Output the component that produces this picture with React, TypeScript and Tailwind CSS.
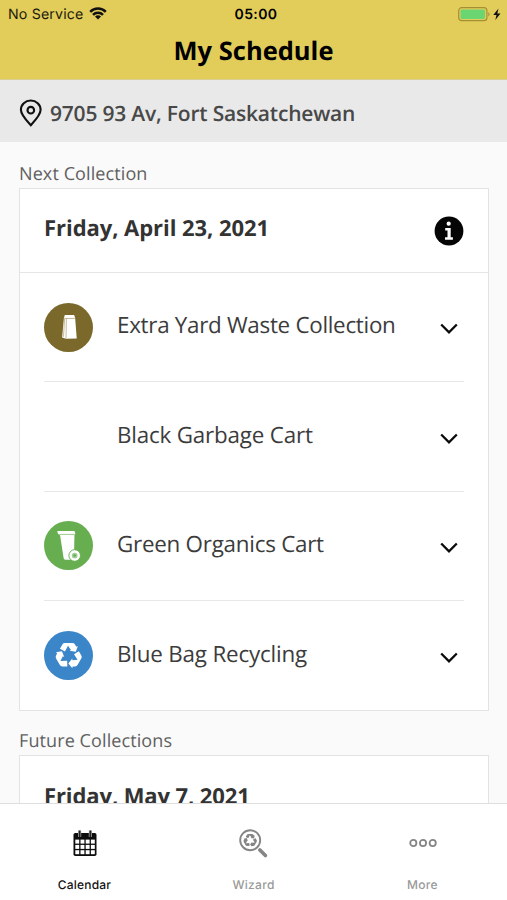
import React from "react";

const openSans = "font-['Open_Sans','Noto_Sans',sans-serif] [text-rendering:geometricPrecision]";

function Wifi() {
  return (
    <svg className="ml-[6px] h-[13px] w-[18px]" viewBox="0 0 18 13">
      <g fill="none" stroke="#111" strokeWidth="2.5">
        <path d="M1.2 4.8a11 11 0 0 1 15.6 0" />
        <path d="M4 7.9a7 7 0 0 1 10 0" />
      </g>
      <path d="M9 12.6 6 9.6a4.3 4.3 0 0 1 6 0z" fill="#111" />
    </svg>
  );
}

function Battery() {
  return (
    <svg className="h-[15px] w-[44px]" viewBox="0 0 44 15">
      <rect x="0.7" y="0.7" width="28.2" height="13" rx="3" fill="none" stroke="#a48f35" strokeWidth="1.2" />
      <rect x="2.5" y="2.5" width="24.5" height="9.4" rx="1.4" fill="#6bd572" />
      <path d="M30.3 5v4.4c1.8-.7 1.8-3.7 0-4.4z" fill="#a48f35" />
      <path d="M40.5 1.5 35.3 8h3.2l-1.2 5 5.2-6.6h-3.2z" fill="#111" />
    </svg>
  );
}

const arrow =
  "M-7.9-6-5.7-9.9Q-4.9-11.2-3.5-11.2H3.2Q4.9-11.2 5.7-9.9L6.9-8 8.3-8.6 6.4-3.3.8-4.2 2-5-.6-8.9-3.4-3.6z";

function RecycleArrows() {
  return (
    <g>
      <path d={arrow} />
      <path d={arrow} transform="rotate(120)" />
      <path d={arrow} transform="rotate(240)" />
    </g>
  );
}

function BagIcon() {
  return (
    <svg className="size-[49px]" viewBox="0 0 50 50">
      <circle cx="25" cy="25" r="25" fill="#7a692b" />
      <path d="M21.2 12.3h9.6l1 3 1.6 20.9-10.8.3-4.1-1.4 1.8-19.5z" fill="#fff" />
      <path d="M20.7 15.8h10.8M22.8 16l-.3 20M21 16l-1.1 18.5" fill="none" stroke="#b3a681" strokeWidth="0.8" />
    </svg>
  );
}

function CartIcon() {
  return (
    <svg className="size-[49px]" viewBox="0 0 50 50">
      <circle cx="25" cy="25" r="25" fill="#67ae50" />
      <path d="M13.5 10.3h17.7l.8 3-.9.8-.5 22c0 2.4-.6 3.4-2 3.4h-6.4c-1.6 0-2-.7-2.3-2.5L16.3 14l-2-.7z" fill="#fff" />
      <path d="M16 13.7h15.4" stroke="#8fc67f" strokeWidth="0.9" />
      <circle cx="31.3" cy="35.2" r="5.9" fill="#fff" stroke="#67ae50" strokeWidth="1" />
      <circle cx="31.3" cy="35.2" r="2.9" fill="#9fce92" />
      <circle cx="31.3" cy="35.2" r="1.3" fill="#67ae50" />
    </svg>
  );
}

function RecycleIcon() {
  return (
    <svg className="size-[49px]" viewBox="0 0 50 50">
      <circle cx="25" cy="25" r="25" fill="#3a86c8" />
      <g fill="#fff" transform="translate(25.2 25) scale(1.13)">
        <RecycleArrows />
      </g>
    </svg>
  );
}

function Chevron() {
  return (
    <svg className="mt-[4px] mr-[6px] h-[12px] w-[18px]" viewBox="0 0 18 12">
      <path d="m1.2 1.5 7.8 7.9 7.8-7.9" fill="none" stroke="#0b0b0b" strokeWidth="2.3" />
    </svg>
  );
}

const rows = [
  { label: "Extra Yard Waste Collection", icon: <BagIcon />, tracking: "tracking-[-0.29px]" },
  { label: "Black Garbage Cart", icon: null, tracking: "tracking-[-0.19px]" },
  { label: "Green Organics Cart", icon: <CartIcon />, tracking: "tracking-[-0.25px]" },
  { label: "Blue Bag Recycling", icon: <RecycleIcon />, tracking: "tracking-[-0.19px]" },
];

function CalendarIcon() {
  return (
    <svg className="h-[27px] w-[26px]" viewBox="0 0 26 27">
      <rect x="1.5" y="3" width="23" height="23" rx="1.8" fill="#0d0d0d" />
      <g fill="#fff">
        {[9.6, 14.9, 20.2].map((y) =>
          [3.3, 8.5, 13.7, 18.9].map((x) => (
            <rect key={`${x}-${y}`} x={x} y={y} width="3.9" height="4" />
          )),
        )}
      </g>
      <path d="M7.6 .5v6.4M18.4 .5v6.4" stroke="#bbb" strokeWidth="3.2" />
      <path d="M7.6 .5v6.4M18.4 .5v6.4" stroke="#222" strokeWidth="1.9" />
    </svg>
  );
}

function WizardIcon() {
  return (
    <svg className="size-[29px]" viewBox="0 0 29 29">
      <circle cx="11.2" cy="11.2" r="10" fill="none" stroke="#858585" strokeWidth="1.9" />
      <path d="m20.9 21 5.5 5.5" stroke="#858585" strokeWidth="3.6" strokeLinecap="round" />
      <g fill="#858585" transform="translate(11.2 11.3) scale(.57)">
        <RecycleArrows />
      </g>
    </svg>
  );
}

function MoreIcon() {
  return (
    <svg className="h-[10px] w-[28px]" viewBox="0 0 28 10">
      <g fill="none" stroke="#858585" strokeWidth="1.8">
        <circle cx="4.3" cy="5" r="3.1" />
        <circle cx="14" cy="5" r="3.1" />
        <circle cx="23.7" cy="5" r="3.1" />
      </g>
    </svg>
  );
}

export default function App() {
  return (
    <div className={`flex h-[900px] w-[507px] flex-col overflow-hidden bg-[#fafafa] text-[#333] ${openSans}`}>
      <header className="h-[80px] shrink-0 border-b border-[#d9cd94] bg-[#e2cc5a] text-black">
        <div className="grid h-[28px] grid-cols-3 items-center font-['Inter',sans-serif] text-[14px]">
          <div className="flex items-center pl-[8px] text-[#1c1a0e]">
            <span className="pt-px text-[14.2px] tracking-[0.15px]">No Service</span>
            <Wifi />
          </div>
          <span className="pl-[5px] text-center font-semibold tracking-[0.4px]">05:00</span>
          <div className="flex justify-end pr-[5px]">
            <Battery />
          </div>
        </div>
        <h1 className="text-center text-[25.5px] leading-[46px] font-bold">My Schedule</h1>
      </header>

      <div className="flex h-[62px] shrink-0 items-center bg-[#e9e9e9] pt-[3px] pl-[19px]">
        <svg className="h-[28px] w-[23px]" viewBox="0 0 23 28">
          <path d="M11.8 26.2C7.5 21.6 1.9 16 1.9 10.8a9.8 9.3 0 0 1 19.7 0c0 5.2-5.5 10.8-9.8 15.4z" fill="none" stroke="#111" strokeWidth="2.1" />
          <circle cx="11.8" cy="11.2" r="3.3" fill="none" stroke="#111" strokeWidth="2.1" />
        </svg>
        <span className="ml-[8px] pt-[4px] text-[21px] font-semibold tracking-[-0.2px] text-[#484848]">9705 93 Av, Fort Saskatchewan</span>
      </div>

      <main className="min-h-0 flex-1 overflow-hidden pr-[18px] pl-[19px]">
        <h2 className="flex h-[46px] items-end pb-px text-[18px] leading-[26px] tracking-[0.1px] text-[#606060]">Next Collection</h2>
        <section className="h-[523px] border border-[#e3e3e3] bg-white">
          <div className="flex h-[84px] items-center justify-between border-b border-[#e5e5e5] px-[24px]">
            <h3 className="pb-[4px] text-[22px] font-bold tracking-[-0.05px]">Friday, April 23, 2021</h3>
            <svg className="size-[30px]" viewBox="0 0 30 30">
              <circle cx="15" cy="15" r="14.4" fill="#050505" />
              <circle cx="14.7" cy="7.7" r="2.1" fill="#fff" />
              <path d="M11.2 12h5.5v9.3h2.2v2.4h-7.9v-2.4h2.5v-6.9h-2.3z" fill="#fff" />
            </svg>
          </div>
          <ul className="px-[24px]">
            {rows.map((row) => (
              <li key={row.label} className="flex h-[109.4px] items-center border-b border-[#e8e8e8] last:border-b-0">
                <div className="w-[73px]">{row.icon}</div>
                <span className={`flex-1 pb-[4px] text-[22.4px] whitespace-nowrap text-[#3c3c3c] ${row.tracking}`}>{row.label}</span>
                <Chevron />
              </li>
            ))}
          </ul>
        </section>
        <h2 className="flex h-[44px] items-end pb-px text-[18px] leading-[26px] tracking-[0.1px] text-[#606060]">Future Collections</h2>
        <section className="h-[100px] border border-[#e3e3e3] bg-white px-[24px] pt-[24px]">
          <h3 className="text-[22px] leading-[33px] font-bold tracking-[-0.1px]">Friday, May 7, 2021</h3>
        </section>
      </main>

      <nav className="grid h-[97px] shrink-0 grid-cols-3 border-t border-[#dedede] bg-white font-['Inter',sans-serif] text-[12px] font-medium text-[#999]">
        <div className="flex flex-col items-center text-[#111]">
          <div className="flex h-[72px] items-center pt-[7px]"><CalendarIcon /></div>
          <span className="leading-[17px] tracking-[0.2px]">Calendar</span>
        </div>
        <div className="flex flex-col items-center">
          <div className="flex h-[72px] items-center pt-[6px]"><WizardIcon /></div>
          <span className="leading-[17px] tracking-[0.3px]">Wizard</span>
        </div>
        <div className="flex flex-col items-center">
          <div className="flex h-[72px] items-center pt-[6px]"><MoreIcon /></div>
          <span className="leading-[17px] tracking-[0.3px]">More</span>
        </div>
      </nav>
    </div>
  );
}
